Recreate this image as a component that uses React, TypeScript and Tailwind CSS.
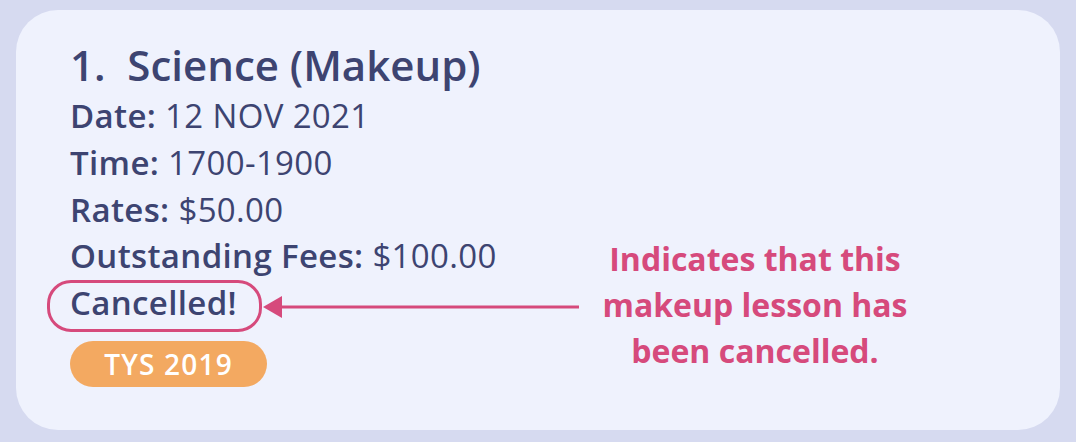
export default function App() {
  const navy = "text-[#3d4471]";
  return (
    <div className="w-[1076px] h-[442px] bg-[#d6daf0] pt-[10px] pl-[16px] pr-[16px] pb-[12px]" style={{ fontFamily: '"Open Sans", "Noto Sans", sans-serif' }}>
      <div className="relative w-full h-full bg-[#eff2fd] rounded-[42px] pl-[54px] pt-[31px]">
        <div className={`${navy} text-[42px] leading-[48px] font-semibold whitespace-pre`}>1.  Science (Makeup)</div>
        <div className={`${navy} text-[33px] leading-[46.75px] tracking-[0.35px] mt-[4px]`}>
          <div><span className="font-semibold">Date:</span> 12 NOV 2021</div>
          <div><span className="font-semibold">Time:</span> 1700-1900</div>
          <div><span className="font-semibold">Rates:</span> $50.00</div>
          <div><span className="font-semibold">Outstanding Fees:</span> $100.00</div>
          <div className="relative">
            <span className="font-semibold">Cancelled!</span>
            <span className="absolute left-[-23px] top-[0px] w-[215px] h-[52px] border-[3px] border-[#d64a7c] rounded-[24px]" />
            <svg className="absolute left-[193px] top-[16px]" width="316" height="22" viewBox="0 0 316 22">
              <polygon points="0,11 19,0 19,22" fill="#d64a7c" />
              <rect x="18" y="9.5" width="298" height="3" fill="#d64a7c" />
            </svg>
            <div className="absolute left-[520px] top-[-44px] w-[330px] text-center text-[#d64a7c] font-bold text-[32px] leading-[46px] tracking-normal">
              Indicates that this<br />makeup lesson has<br />been cancelled.
            </div>
          </div>
        </div>
        <div className="mt-[14px] w-[197px] h-[46px] rounded-full bg-[#f3a961] text-white font-semibold text-[28px] tracking-[1.2px] flex items-center justify-center">
          TYS 2019
        </div>
      </div>
    </div>
  );
}
